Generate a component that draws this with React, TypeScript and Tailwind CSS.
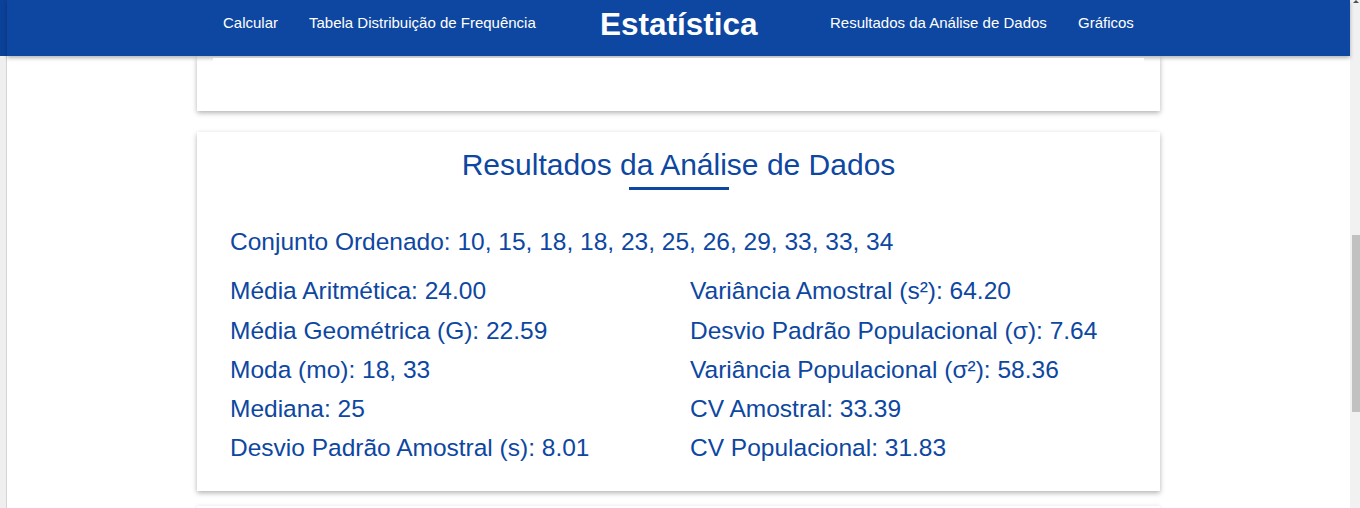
import React from "react";

const left = [
  "Média Aritmética: 24.00",
  "Média Geométrica (G): 22.59",
  "Moda (mo): 18, 33",
  "Mediana: 25",
  "Desvio Padrão Amostral (s): 8.01",
];
const right = [
  "Variância Amostral (s²): 64.20",
  "Desvio Padrão Populacional (σ): 7.64",
  "Variância Populacional (σ²): 58.36",
  "CV Amostral: 33.39",
  "CV Populacional: 31.83",
];

export default function App() {
  return (
    <div
      className="flex h-[508px] w-[1360px] overflow-hidden bg-white"
      style={{ fontFamily: '"Liberation Sans", Arial, sans-serif' }}
    >
      {/* left strip */}
      <div className="flex w-[7px] shrink-0 flex-col">
        <div className="h-[56px] bg-[#0b4299]" />
        <div className="flex-1 border-r border-[#d4d4d4] bg-[#efefef]" />
      </div>

      {/* main */}
      <div className="flex w-[1343px] shrink-0 flex-col">
        <header className="relative z-10 h-[56px] shrink-0 bg-[#0d47a1] shadow-[0_2px_4px_rgba(0,0,0,0.3)]">
          <nav className="flex h-[47px] items-center pl-[216px] text-white">
            <div className="w-[86px] text-[15px]">Calcular</div>
            <div className="w-[291px] text-[15px]">Tabela Distribuição de Frequência</div>
            <div className="w-[230px] text-[31.5px] font-bold leading-[38px]">Estatística</div>
            <div className="w-[248px] text-[15px]">Resultados da Análise de Dados</div>
            <div className="text-[15px]">Gráficos</div>
          </nav>
        </header>

        <div className="flex flex-col items-center">
          {/* card 1 (scrolled under header) */}
          <div className="h-[55px] w-[963px] bg-white pt-[2px] shadow-[0_2px_5px_rgba(0,0,0,0.3)]">
            <div className="relative z-20 mx-4 h-[20px] bg-white" />
          </div>

          {/* card 2 */}
          <div className="mt-[21px] w-[963px] bg-white pb-[23px] pl-[33px] pt-[15px] text-[#0d47a1] shadow-[0_2px_5px_rgba(0,0,0,0.3)]">
            <div className="flex flex-col items-center pr-[33px]">
              <h2 className="text-[30px] leading-[36px]">Resultados da Análise de Dados</h2>
              <div className="mt-[4px] h-[3px] w-[100px] bg-[#0d47a1]" />
            </div>
            <p className="mt-[32px] text-[24.5px] leading-[39.25px]">
              Conjunto Ordenado: 10, 15, 18, 18, 23, 25, 26, 29, 33, 33, 34
            </p>
            <div className="mt-[10px] grid grid-cols-[460px_1fr] text-[24.5px] leading-[39.25px]">
              <div className="flex flex-col">
                {left.map((t) => (
                  <div key={t}>{t}</div>
                ))}
              </div>
              <div className="flex flex-col">
                {right.map((t) => (
                  <div key={t}>{t}</div>
                ))}
              </div>
            </div>
          </div>

          {/* card 3 */}
          <div className="mt-[15px] h-[40px] w-[963px] bg-white shadow-[0_0_4px_rgba(0,0,0,0.12)]" />
        </div>
      </div>

      {/* scrollbar */}
      <div className="relative w-[10px] shrink-0 bg-[#f1f1f1]">
        <div className="absolute right-[1px] top-0 h-0 w-0 border-x-[3px] border-b-[3px] border-x-transparent border-b-[#505050]" />
        <div className="absolute left-[2px] right-0 top-[235px] h-[177px] bg-[#c1c1c1]" />
      </div>
    </div>
  );
}
